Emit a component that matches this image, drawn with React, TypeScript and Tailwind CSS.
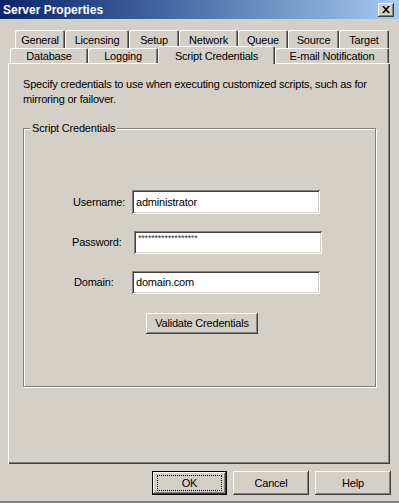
import React from "react";

const font = { fontFamily: '"Liberation Sans", Arial, sans-serif' };

function Tab({ label, width, selected }: { label: string; width: number; selected?: boolean }) {
  if (selected) {
    return (
      <div
        className="relative top-px z-10 flex h-[18px] shrink-0 items-start justify-center rounded-t-[2px] bg-[#d4d0c8] pt-[2px] shadow-[inset_1px_1px_0_#ffffff,inset_-1px_0_0_#404040,inset_-2px_0_0_#808080]"
        style={{ width }}
      >
        {label}
      </div>
    );
  }
  return (
    <div
      className="flex h-full shrink-0 items-center justify-center rounded-t-[2px] bg-[#d4d0c8] pt-[2px] shadow-[inset_1px_1px_0_#ffffff,inset_-1px_0_0_#404040,inset_-2px_0_0_#808080]"
      style={{ width }}
    >
      {label}
    </div>
  );
}

function Field({
  label,
  value,
  labelLeft,
  labelWidth,
  height,
  top,
  password,
}: {
  label: string;
  value: string;
  labelLeft: number;
  labelWidth: number;
  height: number;
  top: number;
  password?: boolean;
}) {
  return (
    <div className="flex items-center" style={{ marginTop: top, paddingLeft: labelLeft }}>
      <span className="shrink-0" style={{ width: labelWidth }}>
        {label}
      </span>
      <div
        className={`flex w-[188px] bg-white pl-[4px] shadow-[inset_1px_1px_0_#808080,inset_-1px_-1px_0_#ffffff,inset_2px_2px_0_#404040,inset_-2px_-2px_0_#d4d0c8] ${
          password ? "items-start pt-[3px] text-[9px] leading-[9px] text-[#333]" : "items-center"
        }`}
        style={{ height }}
      >
        {value}
      </div>
    </div>
  );
}

export default function App() {
  return (
    <div
      className="flex h-[503px] w-[399px] flex-col overflow-hidden border-b-2 border-[#808080] bg-[#d4d0c8] text-[11px] tracking-[-0.2px] text-black"
      style={font}
    >
      {/* title bar */}
      <div className="flex h-[19px] shrink-0 items-center justify-between bg-gradient-to-r from-[#0a246a] to-[#a6caf0] pl-[3px] pr-[5px]">
        <span className="text-[12px] font-bold tracking-normal text-white">Server Properties</span>
        <div className="flex h-[14px] w-[16px] items-center justify-center bg-[#d4d0c8] shadow-[inset_-1px_-1px_0_#404040,inset_1px_1px_0_#ffffff,inset_-2px_-2px_0_#808080]">
          <svg width="8" height="7" viewBox="0 0 8 7">
            <path d="M0 0h2l2 2.2L6 0h2L5 3.5 8 7H6L4 4.8 2 7H0l3-3.5z" fill="#000" />
          </svg>
        </div>
      </div>

      {/* tabs */}
      <div className="ml-[15px] mt-[11px] flex h-[18px] shrink-0">
        <Tab label="General" width={50} />
        <Tab label="Licensing" width={64} />
        <Tab label="Setup" width={50} />
        <Tab label="Network" width={59} />
        <Tab label="Queue" width={50} />
        <Tab label="Source" width={51} />
        <Tab label="Target" width={50} />
      </div>
      <div className="ml-[10px] flex h-[15px] shrink-0 items-end">
        <Tab label="Database" width={78} />
        <Tab label="Logging" width={70} />
        <Tab label="Script Credentials" width={117} selected />
        <Tab label="E-mail Notification" width={114} />
      </div>

      {/* panel */}
      <div className="ml-[8px] flex h-[401px] w-[382px] shrink-0 flex-col pl-[15px] pr-[10px] pt-[14px] shadow-[inset_1px_1px_0_#ffffff,inset_-1px_-1px_0_#404040,inset_-2px_-2px_0_#808080]">
        <p className="leading-[15px]">
          Specify credentials to use when executing customized scripts, such as for mirroring or failover.
        </p>

        <div className="relative mt-[21px] flex h-[259px] w-[353px] flex-col border border-[#808080] shadow-[inset_1px_1px_0_#ffffff,1px_1px_0_#ffffff]">
          <span className="absolute -top-[8px] left-[6px] bg-[#d4d0c8] px-[2px] leading-[14px]">
            Script Credentials
          </span>
          <Field label="Username:" value="administrator" labelLeft={49} labelWidth={59} height={24} top={61} />
          <Field label="Password:" value="******************" labelLeft={48} labelWidth={62} height={23} top={17} password />
          <Field label="Domain:" value="domain.com" labelLeft={50} labelWidth={58} height={23} top={17} />
          <button className="ml-[122px] mt-[19px] flex h-[21px] w-[112px] items-center justify-center bg-[#d4d0c8] shadow-[inset_-1px_-1px_0_#404040,inset_1px_1px_0_#ffffff,inset_-2px_-2px_0_#808080]">
            Validate Credentials
          </button>
        </div>
      </div>

      {/* dialog buttons */}
      <div className="mt-[7px] flex shrink-0 justify-end gap-[6px] pr-[8px]">
        <button className="flex h-[24px] w-[75px] items-center justify-center border border-black bg-[#d4d0c8] shadow-[inset_-1px_-1px_0_#404040,inset_1px_1px_0_#ffffff,inset_-2px_-2px_0_#808080]">
          <span className="flex h-[16px] w-[65px] items-center justify-center border border-dotted border-black">
            OK
          </span>
        </button>
        <button className="flex h-[24px] w-[76px] items-center justify-center bg-[#d4d0c8] shadow-[inset_-1px_-1px_0_#404040,inset_1px_1px_0_#ffffff,inset_-2px_-2px_0_#808080]">
          Cancel
        </button>
        <button className="flex h-[24px] w-[76px] items-center justify-center bg-[#d4d0c8] shadow-[inset_-1px_-1px_0_#404040,inset_1px_1px_0_#ffffff,inset_-2px_-2px_0_#808080]">
          Help
        </button>
      </div>
    </div>
  );
}
